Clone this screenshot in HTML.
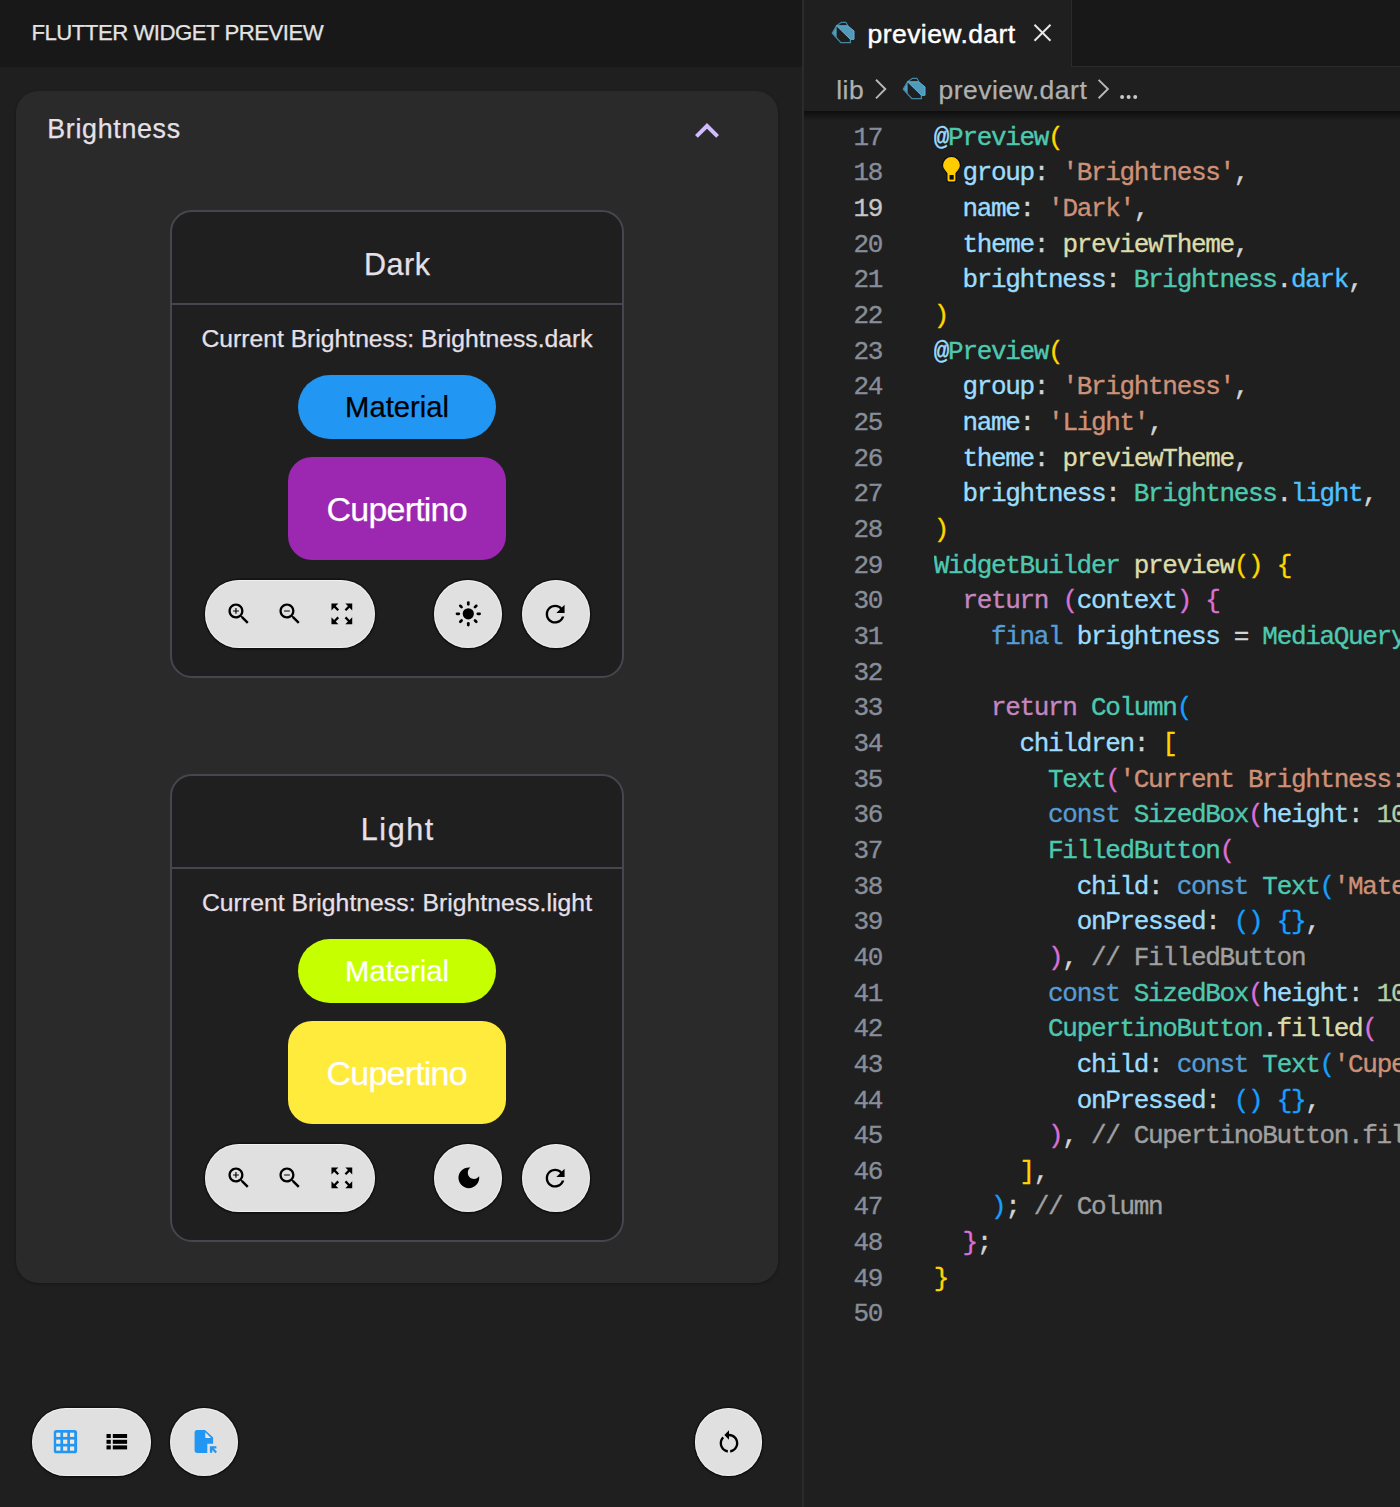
<!DOCTYPE html>
<html><head><meta charset="utf-8">
<style>
*{margin:0;padding:0;box-sizing:border-box}
html,body{width:1400px;height:1507px;overflow:hidden;background:#1f1f1f;font-family:"Liberation Sans",sans-serif}
.a{position:absolute}
.t{position:absolute;white-space:pre;line-height:1}
.code,.ln{-webkit-text-stroke:0.35px currentColor}
.ctitle,.cbody,.mat,.cup,.t{-webkit-text-stroke:0.25px currentColor}
#lhead{left:0;top:0;width:802px;height:67px;background:#181818}
#lbody{left:0;top:67px;width:802px;height:1440px;background:#1f1f1f}
#sep{left:802px;top:0;width:2px;height:1507px;background:#2b2b2b}
#group{left:16px;top:91px;width:762px;height:1192px;background:#2a2a2a;border-radius:22px;box-shadow:0 1px 3px rgba(0,0,0,.35)}
.card{position:absolute;left:170px;width:454px;height:468px;border:2px solid #49454f;border-radius:22px;background:#1f1f1f}
.card .div{position:absolute;left:0;top:91px;width:450px;height:2px;background:#49454f}
.ctitle{position:absolute;left:0;width:450px;text-align:center;font-size:30.5px;color:#e6e0e9;line-height:1;white-space:pre}
.cbody{position:absolute;left:0;width:450px;text-align:center;font-size:24.7px;color:#e6e0e9;line-height:1;white-space:pre}
.mat{position:absolute;left:126px;top:162.5px;width:198px;height:64px;border-radius:32px;text-align:center;font-size:29.2px;line-height:64px}
.cup{position:absolute;left:115.7px;top:245px;width:218px;height:103px;border-radius:24px;text-align:center;font-size:34px;letter-spacing:-0.8px;color:#fff;line-height:104px}
.pill{position:absolute;background:#e0e0e0;box-shadow:inset 0 0 0 1px rgba(255,255,255,.5),0 0 0 1.5px rgba(0,0,0,.35),0 1px 3px rgba(0,0,0,.4)}
.pill svg{position:absolute}

#tabbar{left:804px;top:0;width:596px;height:67px;background:#181818;border-bottom:1px solid #2b2b2b}
#tab{left:804px;top:0;width:268px;height:67px;background:#1f1f1f;border-right:1px solid #2b2b2b}
#crumb{left:804px;top:67px;width:596px;height:44px;background:#1f1f1f}
#shadow{left:804px;top:111px;width:596px;height:10px;background:linear-gradient(#0e0e0e,#1f1f1f)}
.code{position:absolute;font-family:"Liberation Mono",monospace;font-size:26px;letter-spacing:-1.32px;line-height:35.66px;white-space:pre;color:#d4d4d4}
.ln{position:absolute;left:818px;width:64px;text-align:right;font-family:"Liberation Mono",monospace;font-size:26px;letter-spacing:-1.32px;line-height:35.66px;white-space:pre;color:#878e99}
.y{color:#ffd700}.pk{color:#da70d6}.bl{color:#179fff}.pr{color:#9cdcfe}.st{color:#ce9178}.fn{color:#dcdcaa}.cl{color:#4ec9b0}.en{color:#4fc1ff}.kc{color:#c586c0}.kw{color:#569cd6}.nu{color:#b5cea8}.cm{color:#a0a0a0}
</style></head><body>
<div id="lhead" class="a"></div>
<div class="t" style="left:31.4px;top:22.3px;font-size:22.2px;letter-spacing:-0.5px;color:#e3e3e3">FLUTTER WIDGET PREVIEW</div>
<div id="lbody" class="a"></div>
<div id="sep" class="a"></div>
<div id="group" class="a"></div>
<div class="t" style="left:47.2px;top:115.7px;font-size:26.8px;letter-spacing:0.7px;color:#e6e0e9">Brightness</div>
<svg class="a" style="left:683px;top:107px" width="48" height="48" viewBox="0 0 24 24"><path d="M12 8l-6 6 1.41 1.41L12 10.83l4.59 4.58L18 14z" fill="#d0bcff"/></svg>

<!-- EDITOR -->
<div id="tabbar" class="a"></div><div id="tab" class="a"></div><div id="crumb" class="a"></div><div id="shadow" class="a"></div>
<div class="ln" style="top:120.8px">17
18
<span style="color:#c6c6c6">19</span>
20
21
22
23
24
25
26
27
28
29
30
31
32
33
34
35
36
37
38
39
40
41
42
43
44
45
46
47
48
49
50</div>
<div class="code" style="left:933.8px;top:120.8px;width:466px;overflow:hidden"><span class="pr">@</span><span class="cl">Preview</span><span class="y">(</span>
  <span class="pr">group</span>: <span class="st">'Brightness'</span>,
  <span class="pr">name</span>: <span class="st">'Dark'</span>,
  <span class="pr">theme</span>: <span class="fn">previewTheme</span>,
  <span class="pr">brightness</span>: <span class="cl">Brightness</span>.<span class="en">dark</span>,
<span class="y">)</span>
<span class="pr">@</span><span class="cl">Preview</span><span class="y">(</span>
  <span class="pr">group</span>: <span class="st">'Brightness'</span>,
  <span class="pr">name</span>: <span class="st">'Light'</span>,
  <span class="pr">theme</span>: <span class="fn">previewTheme</span>,
  <span class="pr">brightness</span>: <span class="cl">Brightness</span>.<span class="en">light</span>,
<span class="y">)</span>
<span class="cl">WidgetBuilder</span> <span class="fn">preview</span><span class="y">()</span> <span class="y">{</span>
  <span class="kc">return</span> <span class="pk">(</span><span class="pr">context</span><span class="pk">)</span> <span class="pk">{</span>
    <span class="kw">final</span> <span class="pr">brightness</span> = <span class="cl">MediaQuery</span>

    <span class="kc">return</span> <span class="cl">Column</span><span class="bl">(</span>
      <span class="pr">children</span>: <span class="y">[</span>
        <span class="cl">Text</span><span class="pk">(</span><span class="st">'Current Brightness:</span>
        <span class="kw">const</span> <span class="cl">SizedBox</span><span class="pk">(</span><span class="pr">height</span>: <span class="nu">10</span>
        <span class="cl">FilledButton</span><span class="pk">(</span>
          <span class="pr">child</span>: <span class="kw">const</span> <span class="cl">Text</span><span class="bl">(</span><span class="st">'Mate</span>
          <span class="pr">onPressed</span>: <span class="bl">()</span> <span class="bl">{}</span>,
        <span class="pk">)</span>, <span class="cm">// FilledButton</span>
        <span class="kw">const</span> <span class="cl">SizedBox</span><span class="pk">(</span><span class="pr">height</span>: <span class="nu">10</span>
        <span class="cl">CupertinoButton</span>.<span class="fn">filled</span><span class="pk">(</span>
          <span class="pr">child</span>: <span class="kw">const</span> <span class="cl">Text</span><span class="bl">(</span><span class="st">'Cupe</span>
          <span class="pr">onPressed</span>: <span class="bl">()</span> <span class="bl">{}</span>,
        <span class="pk">)</span>, <span class="cm">// CupertinoButton.filled</span>
      <span class="y">]</span>,
    <span class="bl">)</span>; <span class="cm">// Column</span>
  <span class="pk">}</span>;
<span class="y">}</span>
</div>

<!-- TAB/CRUMB -->
<div class="t" style="left:867.6px;top:21px;font-size:26.5px;letter-spacing:0.42px;color:#ffffff;-webkit-text-stroke:0.45px #fff">preview.dart</div>
<svg class="a" style="left:0;top:0" width="1400" height="120"><g stroke="#e8e8e8" stroke-width="2" fill="none"><line x1="1034.5" y1="24.8" x2="1050.5" y2="40.8"/><line x1="1050.5" y1="24.8" x2="1034.5" y2="40.8"/></g><g stroke="#b8b8b8" stroke-width="1.9" fill="none"><polyline points="876,79.8 885.3,89 876,98.3"/><polyline points="1098.6,79.9 1107.9,89 1098.6,98.2"/></g><g fill="#c8c8c8"><circle cx="1122.1" cy="97" r="2"/><circle cx="1128.6" cy="97" r="2"/><circle cx="1135.2" cy="97" r="2"/></g></svg>
<svg class="a" style="left:826px;top:15px" width="36" height="36" viewBox="0 0 36 36"><g transform="scale(1.0)">
<path d="M10.5 10.8 L21.8 10.8 L28 16 L28 24.3 L24.3 24.3 Z" fill="#519aba"/>
<path d="M10.6 10.8 L6.3 18.2 L10.6 23.3 Z" fill="#4f9fc6"/><path d="M10.5 10.8 L6.3 18.2 L14.8 27.6 L24.4 27.6 L24.4 24.3" fill="none" stroke="#45889f" stroke-width="1.3"/>
<path d="M10.5 10.8 L15.5 7.3 L19.8 7.3 L22 10.8" fill="none" stroke="#45889f" stroke-width="1.2"/>
<path d="M10.5 10.8 L21.8 10.8 L28 16 L28 24.3 L24.3 24.3 Z" fill="none" stroke="#5cb6e0" stroke-width="1"/>
</g></svg>
<svg class="a" style="left:897px;top:71px" width="36" height="36" viewBox="0 0 36 36"><g transform="scale(1.0)">
<path d="M10.5 10.8 L21.8 10.8 L28 16 L28 24.3 L24.3 24.3 Z" fill="#519aba"/>
<path d="M10.6 10.8 L6.3 18.2 L10.6 23.3 Z" fill="#4f9fc6"/><path d="M10.5 10.8 L6.3 18.2 L14.8 27.6 L24.4 27.6 L24.4 24.3" fill="none" stroke="#45889f" stroke-width="1.3"/>
<path d="M10.5 10.8 L15.5 7.3 L19.8 7.3 L22 10.8" fill="none" stroke="#45889f" stroke-width="1.2"/>
<path d="M10.5 10.8 L21.8 10.8 L28 16 L28 24.3 L24.3 24.3 Z" fill="none" stroke="#5cb6e0" stroke-width="1"/>
</g></svg>
<div class="t" style="left:836.2px;top:76.6px;font-size:26.5px;color:#b0b0b0;letter-spacing:0.5px">lib</div>
<div class="t" style="left:938.4px;top:76.6px;font-size:26.5px;letter-spacing:0.5px;color:#b0b0b0">preview.dart</div>
<svg class="a" style="left:0;top:0" width="1400" height="200"><path d="M942.4 165.4 A9 9 0 0 1 960.5 165.4 C960.5 169 957.5 171 956 173.5 V180 Q956 182.1 954 182.1 H949 Q946.9 182.1 946.9 180 V173.5 C945.4 171 942.4 169 942.4 165.4 Z" fill="#ffcc00" stroke="#0b0b18" stroke-width="1.2"/><rect x="949.5" y="175" width="4.2" height="4.6" fill="#0b0b18"/></svg>

<!-- DARK CARD -->
<div class="card" style="top:210px">
  <div class="ctitle" style="top:36.9px;letter-spacing:0.6px;padding-left:0.6px">Dark</div>
  <div class="div"></div>
  <div class="cbody" style="top:114.5px">Current Brightness: Brightness.dark</div>
  <div class="mat" style="background:#2196f3;color:#000">Material</div>
  <div class="cup" style="background:#9c27b0">Cupertino</div>
</div>

<!-- LIGHT CARD -->
<div class="card" style="top:774px">
  <div class="ctitle" style="top:37.8px;letter-spacing:1.6px;padding-left:1.6px">Light</div>
  <div class="div"></div>
  <div class="cbody" style="top:114.5px;letter-spacing:0.05px">Current Brightness: Brightness.light</div>
  <div class="mat" style="background:#c6ff00;color:#fff">Material</div>
  <div class="cup" style="background:#ffeb3b">Cupertino</div>
</div>

<!-- TOOLBARS -->
<div class="pill" style="left:205px;top:580px;width:170px;height:68px;border-radius:34px"></div><div class="pill" style="left:434px;top:580px;width:68px;height:68px;border-radius:34px"></div><div class="pill" style="left:521.5px;top:580px;width:68px;height:68px;border-radius:34px"></div><svg class="a" style="left:225px;top:600px" width="27.7" height="27.7" viewBox="0 0 24 24"><path d="M15.5 14h-.79l-.28-.27C15.41 12.59 16 11.11 16 9.5 16 5.91 13.09 3 9.5 3S3 5.91 3 9.5 5.91 16 9.5 16c1.61 0 3.09-.59 4.23-1.57l.27.28v.79l5 4.99L20.49 19l-4.99-5zm-6 0C7.01 14 5 11.99 5 9.5S7.01 5 9.5 5 14 7.01 14 9.5 11.99 14 9.5 14zm2.5-4h-2v2H9v-2H7V9h2V7h1v2h2v1z" fill="#000"/></svg><svg class="a" style="left:276.3px;top:600px" width="27.7" height="27.7" viewBox="0 0 24 24"><path d="M15.5 14h-.79l-.28-.27C15.41 12.59 16 11.11 16 9.5 16 5.91 13.09 3 9.5 3S3 5.91 3 9.5 5.91 16 9.5 16c1.61 0 3.09-.59 4.23-1.57l.27.28v.79l5 4.99L20.49 19l-4.99-5zm-6 0C7.01 14 5 11.99 5 9.5S7.01 5 9.5 5 14 7.01 14 9.5 11.99 14 9.5 14zM7 9h5v1H7z" fill="#000"/></svg><svg class="a" style="left:327.5px;top:600px" width="27.7" height="27.7" viewBox="0 0 24 24"><path d="M15 3l2.3 2.3-2.89 2.87 1.42 1.42L18.7 6.7 21 9V3zM3 9l2.3-2.3 2.87 2.89 1.42-1.42L6.7 5.3 9 3H3zm6 12l-2.3-2.3 2.89-2.87-1.42-1.42L5.3 17.3 3 15v6zm12-6l-2.3 2.3-2.87-2.89-1.42 1.42 2.89 2.87L15 21h6z" fill="#000"/></svg><svg class="a" style="left:0;top:0" width="1400" height="1507"><g stroke="#000" stroke-width="2.7" stroke-linecap="round"><line x1="477.80" y1="613.80" x2="479.60" y2="613.80"/><line x1="475.02" y1="620.52" x2="476.29" y2="621.79"/><line x1="468.30" y1="623.30" x2="468.30" y2="625.10"/><line x1="461.58" y1="620.52" x2="460.31" y2="621.79"/><line x1="458.80" y1="613.80" x2="457.00" y2="613.80"/><line x1="461.58" y1="607.08" x2="460.31" y2="605.81"/><line x1="468.30" y1="604.30" x2="468.30" y2="602.50"/><line x1="475.02" y1="607.08" x2="476.29" y2="605.81"/></g><circle cx="468.3" cy="613.8" r="5.6" fill="#000"/></svg><svg class="a" style="left:540.8px;top:599.6px" width="28.3" height="28.3" viewBox="0 0 24 24"><path d="M17.65 6.35C16.2 4.9 14.21 4 12 4c-4.42 0-7.99 3.58-7.99 8s3.57 8 7.99 8c3.73 0 6.84-2.55 7.73-6h-2.08c-.82 2.33-3.04 4-5.65 4-3.31 0-6-2.69-6-6s2.69-6 6-6c1.66 0 3.14.69 4.22 1.78L13 11h7V4l-2.35 2.35z" fill="#000"/></svg>
<div class="pill" style="left:205px;top:1144px;width:170px;height:68px;border-radius:34px"></div><div class="pill" style="left:434px;top:1144px;width:68px;height:68px;border-radius:34px"></div><div class="pill" style="left:521.5px;top:1144px;width:68px;height:68px;border-radius:34px"></div><svg class="a" style="left:225px;top:1164px" width="27.7" height="27.7" viewBox="0 0 24 24"><path d="M15.5 14h-.79l-.28-.27C15.41 12.59 16 11.11 16 9.5 16 5.91 13.09 3 9.5 3S3 5.91 3 9.5 5.91 16 9.5 16c1.61 0 3.09-.59 4.23-1.57l.27.28v.79l5 4.99L20.49 19l-4.99-5zm-6 0C7.01 14 5 11.99 5 9.5S7.01 5 9.5 5 14 7.01 14 9.5 11.99 14 9.5 14zm2.5-4h-2v2H9v-2H7V9h2V7h1v2h2v1z" fill="#000"/></svg><svg class="a" style="left:276.3px;top:1164px" width="27.7" height="27.7" viewBox="0 0 24 24"><path d="M15.5 14h-.79l-.28-.27C15.41 12.59 16 11.11 16 9.5 16 5.91 13.09 3 9.5 3S3 5.91 3 9.5 5.91 16 9.5 16c1.61 0 3.09-.59 4.23-1.57l.27.28v.79l5 4.99L20.49 19l-4.99-5zm-6 0C7.01 14 5 11.99 5 9.5S7.01 5 9.5 5 14 7.01 14 9.5 11.99 14 9.5 14zM7 9h5v1H7z" fill="#000"/></svg><svg class="a" style="left:327.5px;top:1164px" width="27.7" height="27.7" viewBox="0 0 24 24"><path d="M15 3l2.3 2.3-2.89 2.87 1.42 1.42L18.7 6.7 21 9V3zM3 9l2.3-2.3 2.87 2.89 1.42-1.42L6.7 5.3 9 3H3zm6 12l-2.3-2.3 2.89-2.87-1.42-1.42L5.3 17.3 3 15v6zm12-6l-2.3 2.3-2.87-2.89-1.42 1.42 2.89 2.87L15 21h6z" fill="#000"/></svg><svg class="a" style="left:454.6px;top:1164.3px" width="27.7" height="27.7" viewBox="0 0 24 24"><path d="M12 3c-4.97 0-9 4.03-9 9s4.03 9 9 9 9-4.03 9-9c0-.46-.04-.92-.1-1.36-.98 1.37-2.58 2.26-4.4 2.26-2.98 0-5.4-2.42-5.4-5.4 0-1.81.89-3.42 2.26-4.4-.44-.06-.9-.1-1.36-.1z" fill="#000"/></svg><svg class="a" style="left:540.8px;top:1163.6px" width="28.3" height="28.3" viewBox="0 0 24 24"><path d="M17.65 6.35C16.2 4.9 14.21 4 12 4c-4.42 0-7.99 3.58-7.99 8s3.57 8 7.99 8c3.73 0 6.84-2.55 7.73-6h-2.08c-.82 2.33-3.04 4-5.65 4-3.31 0-6-2.69-6-6s2.69-6 6-6c1.66 0 3.14.69 4.22 1.78L13 11h7V4l-2.35 2.35z" fill="#000"/></svg>
<!-- BOTTOM TOOLBAR -->
<div class="pill" style="left:31.5px;top:1408px;width:119px;height:67.5px;border-radius:34px"></div><div class="pill" style="left:170px;top:1408px;width:68px;height:67.5px;border-radius:34px"></div><div class="pill" style="left:695px;top:1408px;width:67px;height:67.5px;border-radius:34px"></div><svg class="a" style="left:0;top:0" width="1400" height="1507"><rect x="53.8" y="1429.9" width="23.3" height="23.4" rx="2.6" fill="#2196f3"/><rect x="56.2" y="1432.7" width="4.2" height="4.2" fill="#f3e8da"/><rect x="56.2" y="1439.6" width="4.2" height="4.2" fill="#f3e8da"/><rect x="56.2" y="1446.5" width="4.2" height="4.2" fill="#f3e8da"/><rect x="63.1" y="1432.7" width="4.2" height="4.2" fill="#f3e8da"/><rect x="63.1" y="1439.6" width="4.2" height="4.2" fill="#f3e8da"/><rect x="63.1" y="1446.5" width="4.2" height="4.2" fill="#f3e8da"/><rect x="70.0" y="1432.7" width="4.2" height="4.2" fill="#f3e8da"/><rect x="70.0" y="1439.6" width="4.2" height="4.2" fill="#f3e8da"/><rect x="70.0" y="1446.5" width="4.2" height="4.2" fill="#f3e8da"/><rect x="106.5" y="1434" width="4.3" height="4" fill="#000"/><rect x="112.8" y="1434" width="14.3" height="4" fill="#000"/><rect x="106.5" y="1439.8" width="4.3" height="4" fill="#000"/><rect x="112.8" y="1439.8" width="14.3" height="4" fill="#000"/><rect x="106.5" y="1445.4" width="4.3" height="4" fill="#000"/><rect x="112.8" y="1445.4" width="14.3" height="4" fill="#000"/><path d="M197.2 1429.9 H205 L213.1 1437.6 V1443.7 H207.3 V1452.9 H197.2 Q194.6 1452.9 194.6 1450.3 V1432.5 Q194.6 1429.9 197.2 1429.9 Z" fill="#2196f3"/><path d="M205.3 1432.3 V1438 H211 Z" fill="#f1e6d8"/><path d="M209.9 1446.2 H216.4 V1448.5 H213.8 L217 1451.7 L215.4 1453.3 L212.2 1450.1 V1452.8 H209.9 Z" fill="#2196f3"/></svg><svg class="a" style="left:714.9px;top:1427.7px" width="28" height="28" viewBox="0 0 24 24"><path d="M12 5V2L8 6l4 4V7c3.31 0 6 2.69 6 6 0 2.97-2.17 5.43-5 5.91v2.02c3.95-.49 7-3.85 7-7.93 0-4.42-3.58-8-8-8zm-6 8c0-1.65.67-3.15 1.76-4.24L6.34 7.34C4.9 8.79 4 10.79 4 13c0 4.08 3.05 7.44 7 7.93v-2.02c-2.83-.48-5-2.94-5-5.91z" fill="#000"/></svg>
</body></html>
